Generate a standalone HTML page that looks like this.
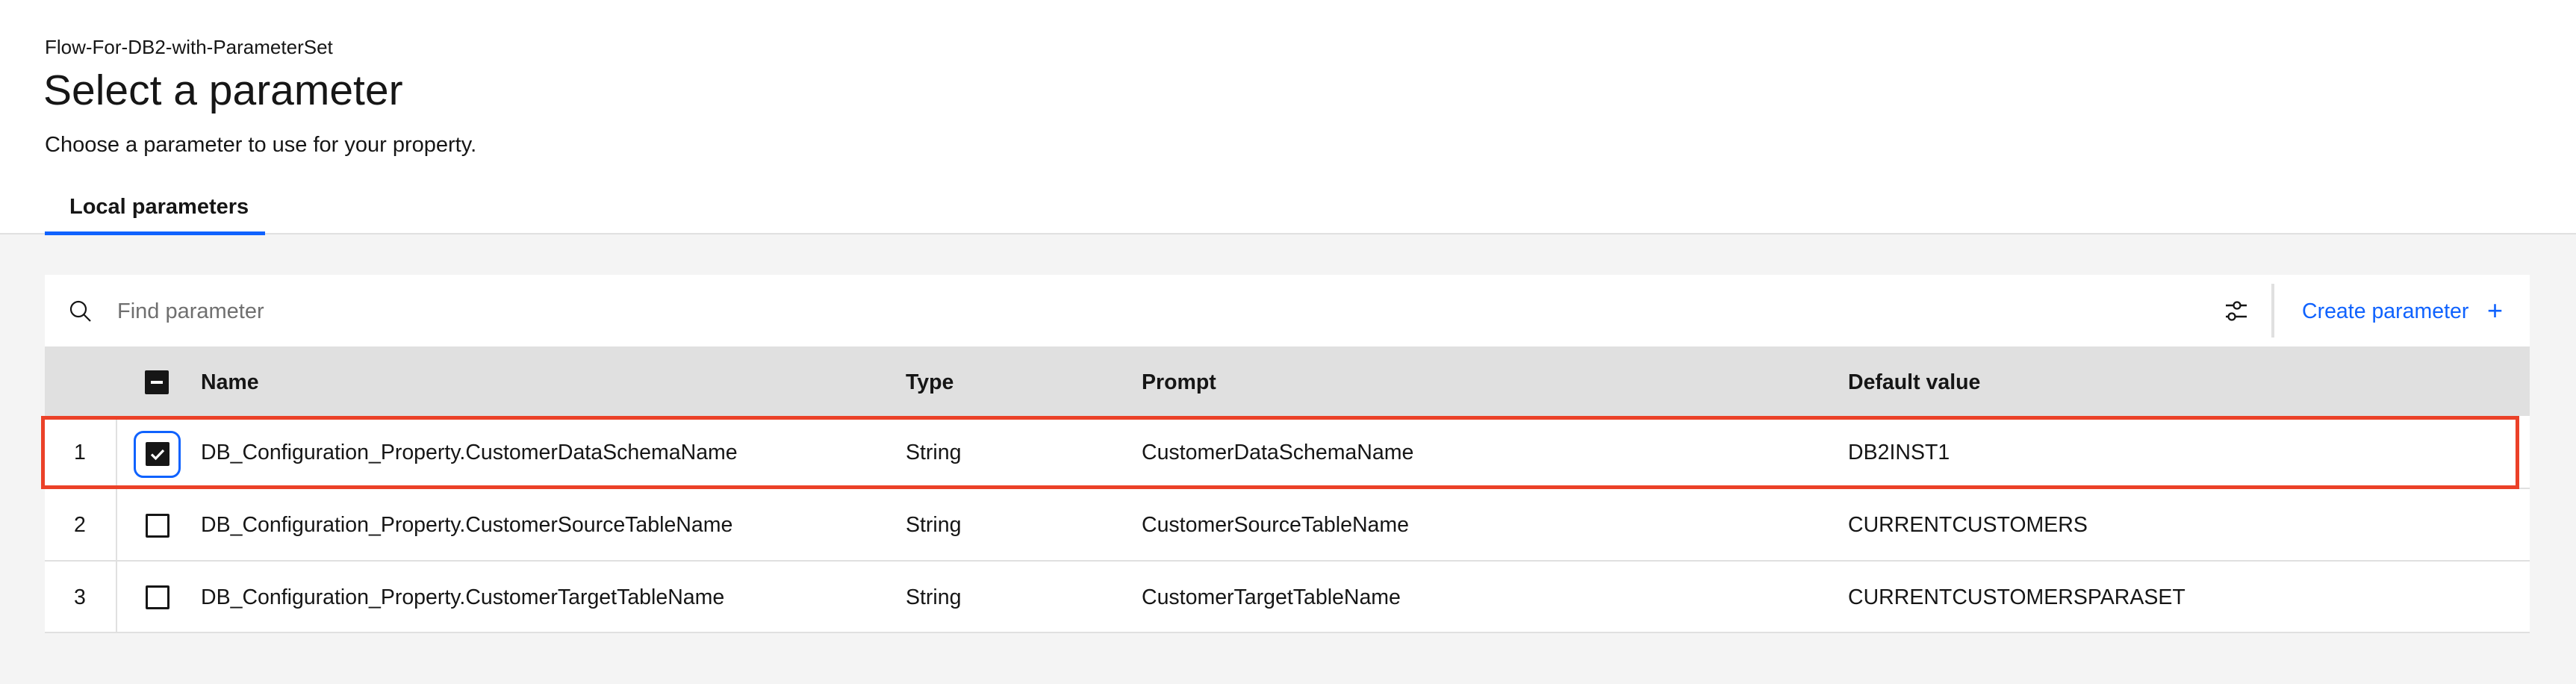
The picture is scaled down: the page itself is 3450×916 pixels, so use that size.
<!DOCTYPE html>
<html><head><meta charset="utf-8"><style>
*{margin:0;padding:0;box-sizing:border-box}
body{width:3450px;height:916px;background:#f4f4f4;font-family:"Liberation Sans",sans-serif;color:#161616;position:relative;overflow:hidden}
.a{position:absolute;white-space:nowrap}
.top{position:absolute;left:0;top:0;width:3450px;height:314px;background:#fff;border-bottom:2px solid #e0e0e0}
.t{font-size:28.5px;line-height:30px}
.b{font-weight:bold}
.cb{position:absolute;width:32px;height:32px;border:3px solid #161616;border-radius:2px;background:#fff}
.row{position:absolute;left:60px;width:3328px;background:#fff;border-bottom:2px solid #e0e0e0}
</style></head><body>
<div class="top"></div>
<div class="a" style="left:60px;top:49px;font-size:26px;line-height:28px">Flow-For-DB2-with-ParameterSet</div>
<div class="a" style="left:58px;top:89px;font-size:57px;line-height:64px">Select a parameter</div>
<div class="a" style="left:60px;top:178px;font-size:29px;line-height:32px">Choose a parameter to use for your property.</div>
<div class="a b" style="left:93px;top:262px;font-size:29px;line-height:30px">Local parameters</div>
<div class="a" style="left:60px;top:310px;width:295px;height:5px;background:#0f62fe"></div>

<div class="a" style="left:60px;top:368px;width:3328px;height:96px;background:#fff"></div>
<svg class="a" style="left:92px;top:401px" width="32" height="32" viewBox="0 0 32 32"><circle cx="13" cy="13" r="10" fill="none" stroke="#161616" stroke-width="2.2"/><line x1="20.5" y1="20.5" x2="29" y2="29" stroke="#161616" stroke-width="2.2"/></svg>
<div class="a t" style="left:157px;top:402px;color:#6f6f6f;font-size:29px">Find parameter</div>
<svg class="a" style="left:2978px;top:402px" width="34" height="30" viewBox="0 0 34 30"><line x1="3" y1="7" x2="13" y2="7" stroke="#161616" stroke-width="2.5"/><line x1="23" y1="7" x2="31" y2="7" stroke="#161616" stroke-width="2.5"/><circle cx="18" cy="7" r="4.5" fill="#fff" stroke="#161616" stroke-width="2.3"/><line x1="3" y1="22" x2="6" y2="22" stroke="#161616" stroke-width="2.5"/><line x1="16" y1="22" x2="31" y2="22" stroke="#161616" stroke-width="2.5"/><circle cx="11" cy="22" r="4.5" fill="#fff" stroke="#161616" stroke-width="2.3"/></svg>
<div class="a" style="left:3042px;top:380px;width:4px;height:72px;background:#e0e0e0"></div>
<div class="a t" style="left:3083px;top:402px;color:#0f62fe">Create parameter</div>
<div class="a" style="left:3331px;top:398px;font-size:36px;line-height:36px;color:#0f62fe">+</div>

<div class="a" style="left:60px;top:464px;width:3328px;height:93px;background:#e0e0e0"></div>
<div class="a" style="left:194px;top:496px;width:32px;height:32px;background:#161616;border-radius:2px"></div>
<div class="a" style="left:202px;top:510px;width:16px;height:4px;background:#fff"></div>
<div class="a t b" style="left:269px;top:497px">Name</div>
<div class="a t b" style="left:1213px;top:497px">Type</div>
<div class="a t b" style="left:1529px;top:497px">Prompt</div>
<div class="a t b" style="left:2475px;top:497px">Default value</div>

<div class="row" style="top:557px;height:98px"></div>
<div class="row" style="top:655px;height:97px"></div>
<div class="row" style="top:752px;height:96px"></div>
<div class="a" style="left:155px;top:557px;width:2px;height:290px;background:#e0e0e0"></div>

<div class="a t" style="left:99px;top:591px">1</div>
<div class="a t" style="left:99px;top:688px">2</div>
<div class="a t" style="left:99px;top:785px">3</div>

<div class="a" style="left:179px;top:577px;width:63px;height:63px;border:3px solid #0f62fe;border-radius:13px"></div>
<div class="a" style="left:195px;top:592px;width:32px;height:32px;background:#161616;border-radius:2px"></div>
<svg class="a" style="left:195px;top:592px" width="32" height="32" viewBox="0 0 32 32"><path d="M8 16.5 L13.5 22 L24 11" fill="none" stroke="#fff" stroke-width="3.2"/></svg>
<div class="cb" style="left:195px;top:688px"></div>
<div class="cb" style="left:195px;top:784px"></div>

<div class="a t" style="left:269px;top:591px">DB_Configuration_Property.CustomerDataSchemaName</div>
<div class="a t" style="left:1213px;top:591px">String</div>
<div class="a t" style="left:1529px;top:591px">CustomerDataSchemaName</div>
<div class="a t" style="left:2475px;top:591px">DB2INST1</div>

<div class="a t" style="left:269px;top:688px">DB_Configuration_Property.CustomerSourceTableName</div>
<div class="a t" style="left:1213px;top:688px">String</div>
<div class="a t" style="left:1529px;top:688px">CustomerSourceTableName</div>
<div class="a t" style="left:2475px;top:688px">CURRENTCUSTOMERS</div>

<div class="a t" style="left:269px;top:785px">DB_Configuration_Property.CustomerTargetTableName</div>
<div class="a t" style="left:1213px;top:785px">String</div>
<div class="a t" style="left:1529px;top:785px">CustomerTargetTableName</div>
<div class="a t" style="left:2475px;top:785px">CURRENTCUSTOMERSPARASET</div>

<div class="a" style="left:55px;top:557px;width:3319px;height:98px;border:5px solid #eb4128"></div>
</body></html>
